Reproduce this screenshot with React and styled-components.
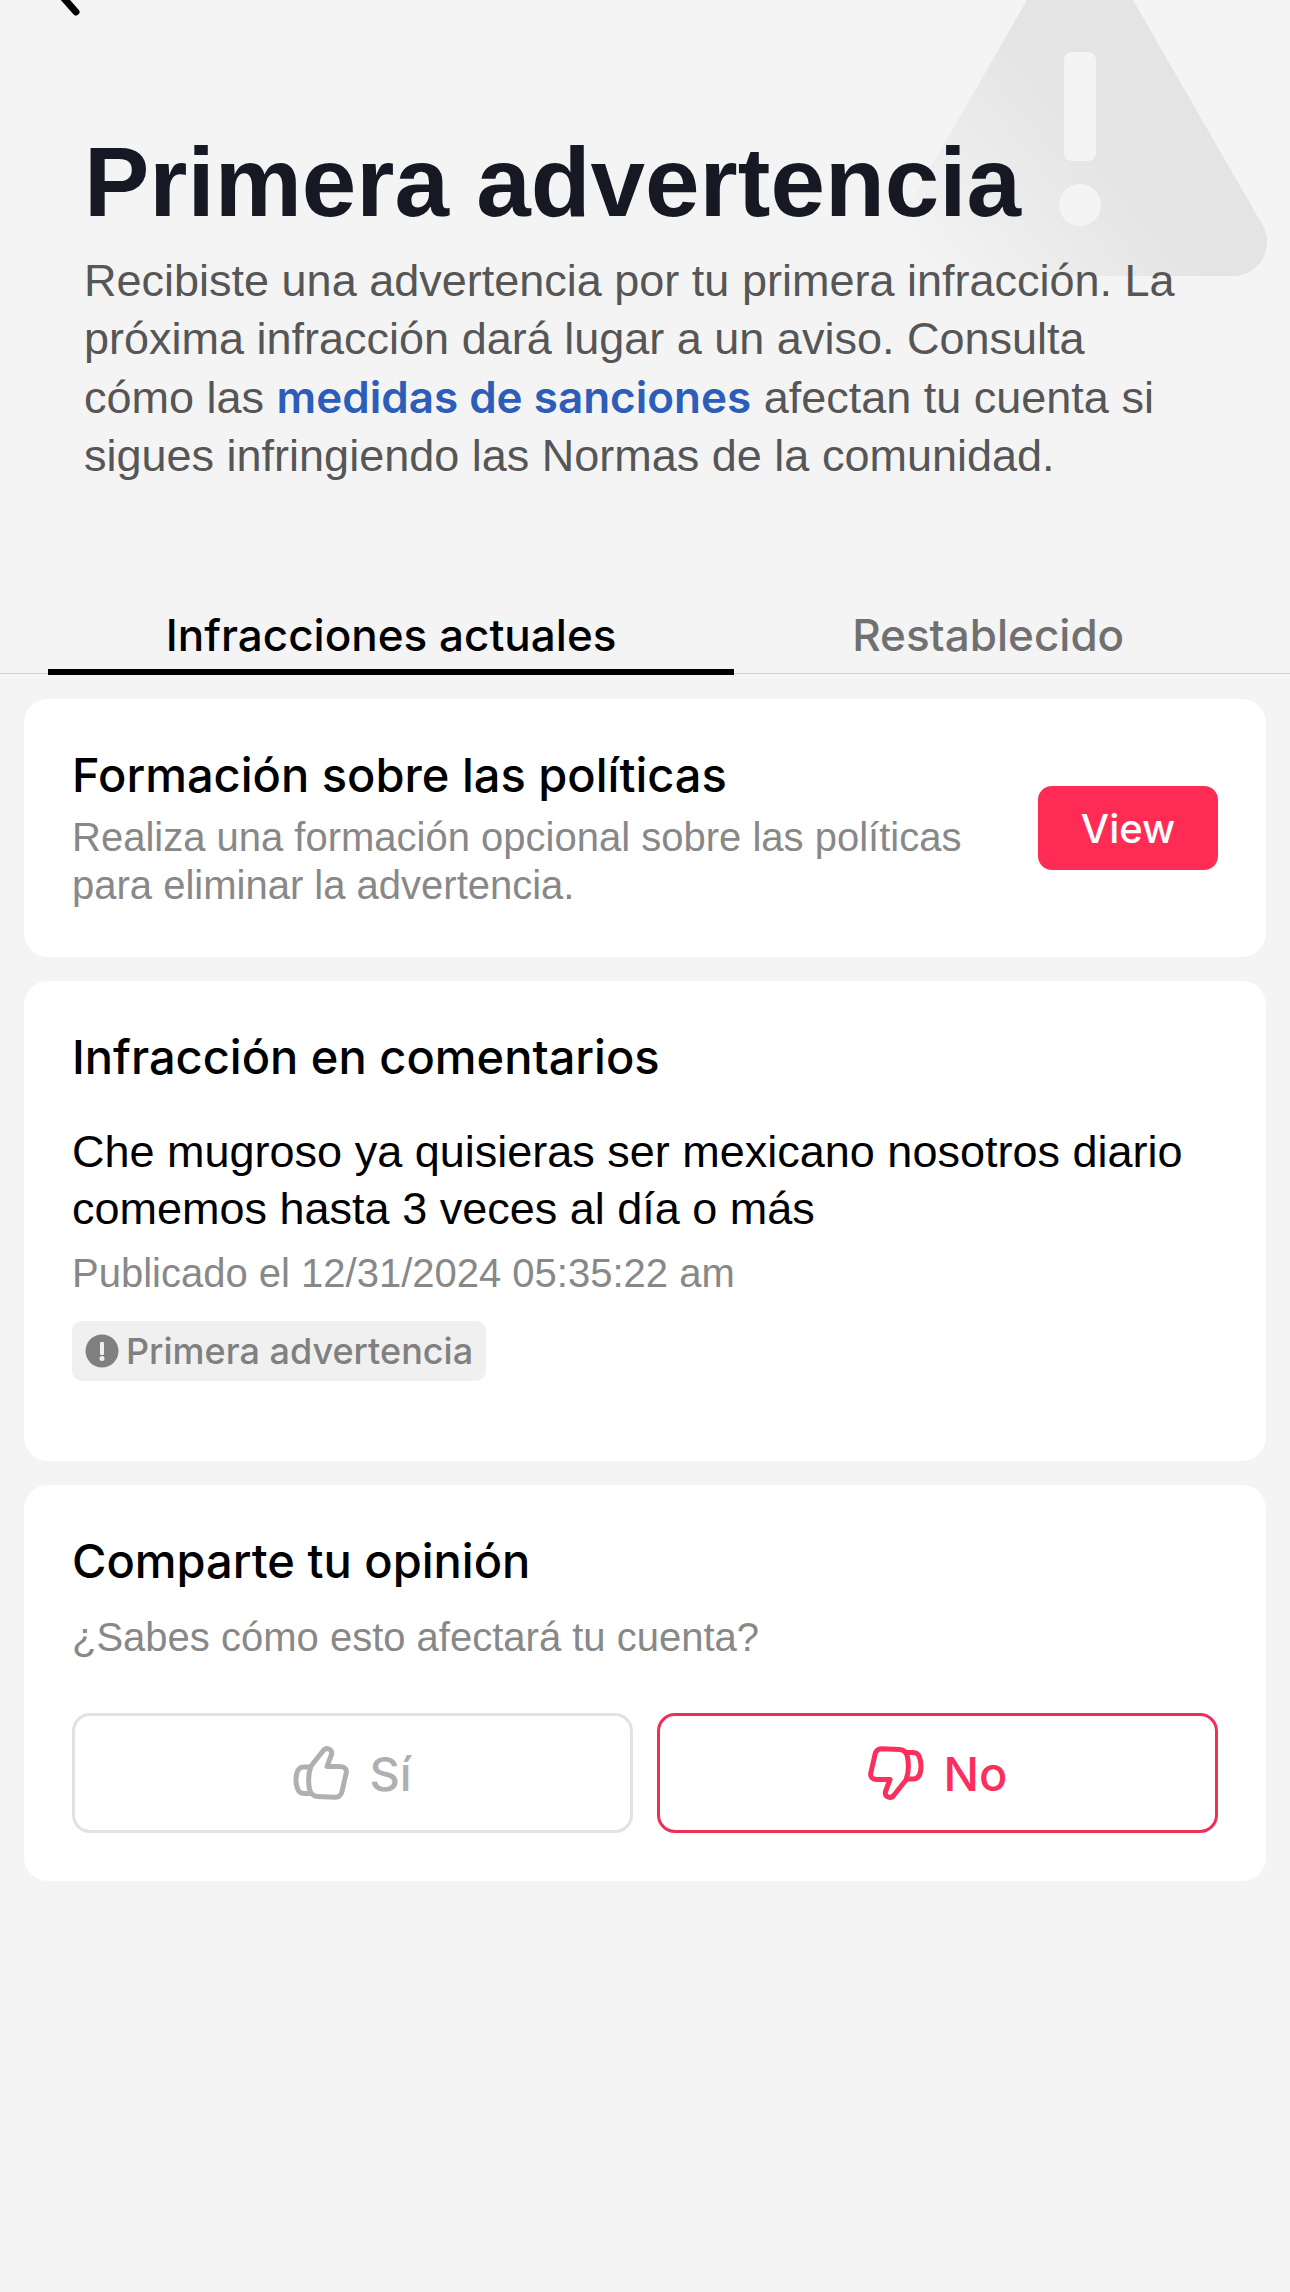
import { useState } from 'react';
import styled, { createGlobalStyle } from 'styled-components';

function App() {
   const [tab, setTab] = useState('current');
   const [answer, setAnswer] = useState('no');

   return (
      <Page>
         <GlobalStyle />
         <Header>
            <WarningArt />
            <BackButton type="button" aria-label="Volver">
               <svg width="36" height="18" viewBox="0 0 36 18" fill="none" stroke="#000" strokeWidth="7" strokeLinecap="round">
                  <path d="M28 12L-2 -22L28 -56" />
               </svg>
            </BackButton>
            <Title>Primera advertencia</Title>
            <Intro>
               Recibiste una advertencia por tu primera infracción. La próxima infracción dará lugar a un aviso.
               Consulta cómo las <a href="#sanciones">medidas de sanciones</a> afectan tu cuenta si sigues
               infringiendo las Normas de la comunidad.
            </Intro>
         </Header>

         <Tabs role="tablist">
            <Tab type="button" role="tab" aria-selected={tab === 'current'} $active={tab === 'current'} onClick={() => setTab('current')}>
               Infracciones actuales
            </Tab>
            <Tab type="button" role="tab" aria-selected={tab === 'restored'} $active={tab === 'restored'} onClick={() => setTab('restored')}>
               Restablecido
            </Tab>
         </Tabs>

         <Cards>
            <Card>
               <TrainingRow>
                  <div>
                     <CardTitle>Formación sobre las políticas</CardTitle>
                     <Note $space={10}>Realiza una formación opcional sobre las políticas para eliminar la advertencia.</Note>
                  </div>
                  <ViewButton type="button">View</ViewButton>
               </TrainingRow>
            </Card>

            <Card $bottom={80}>
               <CardTitle>Infracción en comentarios</CardTitle>
               <Comment>Che mugroso ya quisieras ser mexicano nosotros diario comemos hasta 3 veces al día o más</Comment>
               <Note $space={12}>Publicado el 12/31/2024 05:35:22 am</Note>
               <Badge>
                  <AlertIcon />
                  Primera advertencia
               </Badge>
            </Card>

            <Card>
               <CardTitle>Comparte tu opinión</CardTitle>
               <Note $space={24}>¿Sabes cómo esto afectará tu cuenta?</Note>
               <Answers>
                  <AnswerButton type="button" aria-pressed={answer === 'yes'} $active={answer === 'yes'} onClick={() => setAnswer('yes')}>
                     <ThumbIcon />
                     Sí
                  </AnswerButton>
                  <AnswerButton type="button" aria-pressed={answer === 'no'} $active={answer === 'no'} onClick={() => setAnswer('no')}>
                     <ThumbIcon down />
                     No
                  </AnswerButton>
               </Answers>
            </Card>
         </Cards>
      </Page>
   );
}

export default App;

function WarningArt() {
   return (
      <Art width="422" height="276" viewBox="0 0 422 276" aria-hidden="true">
         <defs>
            <linearGradient id="fade" gradientUnits="userSpaceOnUse" x1="30" y1="245" x2="205" y2="105">
               <stop offset="0" stopColor="#f4f4f4" />
               <stop offset="1" stopColor="#e4e4e4" />
            </linearGradient>
         </defs>
         <path d="M159 0H265L394.5 225A34 34 0 0 1 365 276H59A34 34 0 0 1 29.5 225Z" fill="url(#fade)" />
         <rect x="196" y="52" width="32" height="109" rx="8" fill="#f4f4f4" />
         <circle cx="212" cy="205" r="21" fill="#f4f4f4" />
      </Art>
   );
}

function AlertIcon() {
   return (
      <svg width="34" height="34" viewBox="0 0 34 34" aria-hidden="true">
         <circle cx="17" cy="17" r="16.5" fill="#808080" />
         <rect x="15" y="8" width="4" height="13" rx="1" fill="#f0f0f0" />
         <circle cx="17" cy="24.5" r="2.5" fill="#f0f0f0" />
      </svg>
   );
}

function ThumbIcon({ down }) {
   return (
      <svg width="56" height="54" viewBox="0 0 56 54" fill="none" stroke="currentColor" strokeWidth="5" strokeLinejoin="round" aria-hidden="true">
         <g transform={down ? 'rotate(180 28 27)' : undefined}>
            <path d="M18 20L30 5C33 0.5 40 3 38.5 8.5L34 20.5H47C51.500 20.500 54 23 53.200 27L49 45.500C48 49.500 46 51.200 42.500 51.200L24.500 50.500C19.500 50.200 17.500 47.500 16.500 43C15.200 36 15 28 18 20Z" />
            <path d="M18 21H11C7 21 4.500 23.500 3.500 28.500C2.500 34 2.800 38 4.500 42.500C5.500 45.800 7.500 47.500 11 47.500H18.500" />
         </g>
      </svg>
   );
}

const GlobalStyle = createGlobalStyle`
   * {
      box-sizing: border-box;
   }

   body {
      margin: 0;
      background: #f4f4f4;
      color: #000;
      font-family: 'Liberation Sans', Arial, sans-serif;
   }

   h1, h2, p {
      margin: 0;
   }

   button {
      padding: 0;
      border: 0;
      background: none;
      font-family: Inter, 'Liberation Sans', sans-serif;
      cursor: pointer;
   }
`;

const Page = styled.main`
   min-height: 100vh;
`;

const Header = styled.header`
   position: relative;
   display: flex;
   flex-direction: column;
   align-items: flex-start;
   padding: 0 84px;
`;

const Art = styled.svg`
   position: absolute;
   top: 0;
   right: 0;
   z-index: -1;
`;

const BackButton = styled.button`
   display: flex;
   margin: 0 0 108px -36px;
`;

const Title = styled.h1`
   color: #161823;
   font-size: 98px;
   font-weight: 700;
   line-height: 112px;
`;

const Intro = styled.p`
   margin-top: 14px;
   color: #565656;
   font-size: 45px;
   line-height: 58px;

   & a {
      color: #2b5db9;
      font-family: Inter, 'Liberation Sans', sans-serif;
      font-size: 44px;
      font-weight: 600;
      text-decoration: none;
   }
`;

const Tabs = styled.div`
   display: flex;
   margin: 120px 0 25px;
   padding: 0 48px;
   border-bottom: 1px solid #cfcfcf;
`;

const Tab = styled.button`
   flex: 1 1 auto;
   && {
      padding: 0 114px 4px;
   }
   margin-bottom: -2px;
   border-bottom: 6px solid ${({ $active }) => ($active ? '#000' : 'transparent')};
   color: ${({ $active }) => ($active ? '#000' : '#707070')};
   font-size: 44px;
   font-weight: 500;
   line-height: 60px;
   white-space: nowrap;
`;

const Cards = styled.div`
   display: flex;
   flex-direction: column;
   gap: 24px;
   padding: 0 24px;
`;

const Card = styled.section`
   padding: 48px 48px ${({ $bottom }) => $bottom || 48}px;
   border-radius: 24px;
   background: #fff;
`;

const TrainingRow = styled.div`
   display: flex;
   align-items: center;
   justify-content: space-between;
   gap: 60px;
`;

const CardTitle = styled.h2`
   font-family: Inter, 'Liberation Sans', sans-serif;
   font-size: 47px;
   font-weight: 500;
   line-height: 56px;
`;

const Note = styled.p`
   margin-top: ${({ $space }) => $space}px;
   color: #888;
   font-size: 40px;
   line-height: 48px;
`;

const Comment = styled.p`
   margin-top: 38px;
   font-size: 45px;
   line-height: 57px;
`;

const ViewButton = styled.button`
   flex-shrink: 0;
   width: 180px;
   height: 84px;
   border-radius: 14px;
   background: #fe2c55;
   color: #fff;
   font-size: 40px;
   font-weight: 500;
`;

const Badge = styled.div`
   display: inline-flex;
   align-items: center;
   gap: 7px;
   height: 60px;
   margin-top: 24px;
   padding: 0 13px;
   border-radius: 10px;
   background: #f0f0f0;
   color: #808080;
   font-family: Inter, 'Liberation Sans', sans-serif;
   font-size: 36px;
   font-weight: 500;
`;

const Answers = styled.div`
   display: grid;
   grid-template-columns: 1fr 1fr;
   gap: 24px;
   margin-top: 52px;
`;

const AnswerButton = styled.button`
   display: flex;
   align-items: center;
   justify-content: center;
   gap: 20px;
   height: 120px;
   border: 3px solid ${({ $active }) => ($active ? '#ee3059' : '#e2e2e2')};
   border-radius: 18px;
   color: ${({ $active }) => ($active ? '#fa2f5b' : '#b0b0b0')};
   font-size: 47px;
   font-weight: 500;
`;
